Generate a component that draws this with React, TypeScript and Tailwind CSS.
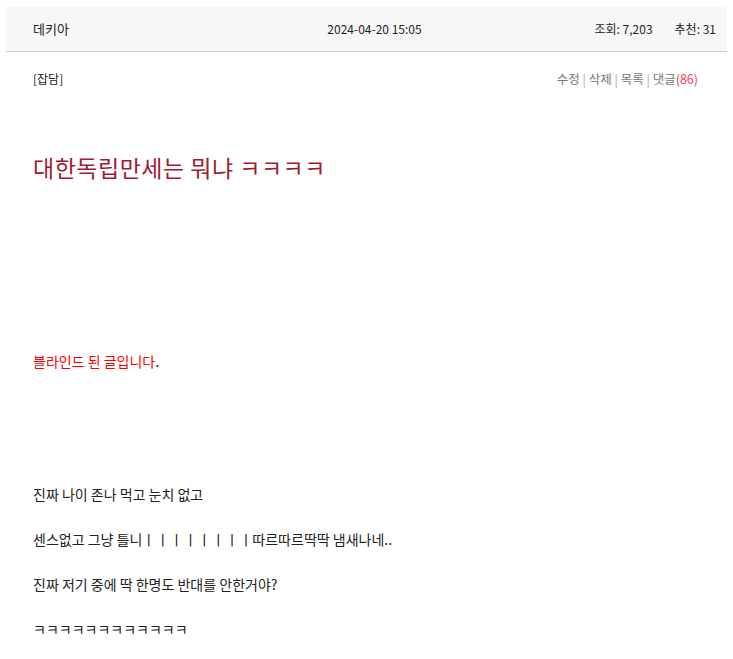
import React from 'react';

const font = { fontFamily: "'Malgun Gothic', 'Noto Sans CJK KR', sans-serif" };

export default function App() {
    return (
        <div className="min-h-screen bg-white px-[6px] pt-[7px] text-[#222]" style={font}>
            {/* header */}
            <div className="flex items-center h-[45px] bg-[#f7f7f7] border-b border-[#cccccc] pl-[27px] pr-[11px] text-[12px] text-[#222]">
                <div className="flex-1 text-[13px]">데키아</div>
                <div className="flex-1 text-center">2024-04-20 15:05</div>
                <div className="flex-1 flex justify-end gap-[22px]">
                    <span>조회: 7,203</span>
                    <span>추천: 31</span>
                </div>
            </div>

            <div className="px-[27px]">
                <div className="flex justify-between items-center pt-[18px] pr-[2px] text-[12px]">
                    <span>[잡담]</span>
                    <span className="text-[#777] text-[12.5px]">
                        수정 <span className="text-[#aaa]">|</span> 삭제 <span className="text-[#aaa]">|</span> 목록 <span className="text-[#aaa]">|</span> 댓글<span className="text-[#ef3b5a]">(86)</span>
                    </span>
                </div>

                <h1 className="mt-[63px] text-[23px] font-normal tracking-[0.5px] text-[#9e1b32] leading-[30px]">
                    대한독립만세는 뭐냐 ㅋㅋㅋㅋ
                </h1>

                <p className="mt-[169px] text-[14px] leading-[20px]">
                    <span className="text-[#ff0000]">블라인드 된 글입니다</span>.
                </p>

                <div className="mt-[113px] text-[14px] leading-[20px] flex flex-col gap-[25px]">
                    <p>진짜 나이 존나 먹고 눈치 없고</p>
                    <p>센스없고 그냥 틀니<span className="tracking-[1px]">ㅣㅣㅣㅣㅣㅣㅣ</span>ㅣ따르따르딱딱 냄새나네..</p>
                    <p>진짜 저기 중에 딱 한명도 반대를 안한거야?</p>
                    <p>ㅋㅋㅋㅋㅋㅋㅋㅋㅋㅋㅋㅋ</p>
                </div>
            </div>
        </div>
    );
}
